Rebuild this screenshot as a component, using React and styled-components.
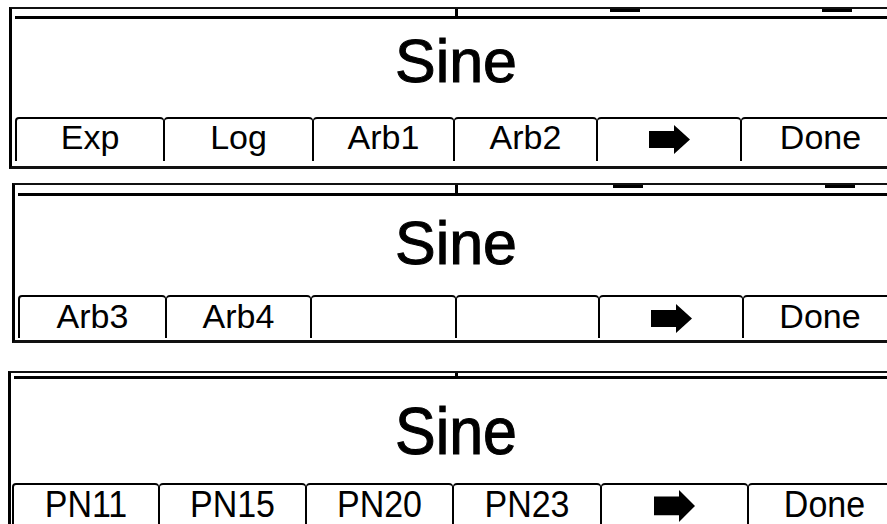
import React from 'react';
import styled, { createGlobalStyle } from 'styled-components';

const GlobalStyle = createGlobalStyle`
  html, body {
    margin: 0;
    padding: 0;
    background: #fff;
  }
  body {
    font-family: "Liberation Sans", Arial, sans-serif;
    color: #000;
  }
`;

const Page = styled.div`
  width: 887px;
  height: 524px;
  overflow: hidden;
  display: flex;
  flex-direction: column;
`;

const Screen = styled.div`
  flex-shrink: 0;
  width: ${p => p.$width}px;
  margin-top: ${p => p.$top}px;
  margin-left: ${p => p.$left}px;
  border-top: 2px solid #111;
  border-left: 3px solid #000;
  border-bottom: ${p => (p.$bottom ? '3px solid #111' : 'none')};
  display: flex;
  flex-direction: column;
`;

const Strip = styled.div`
  position: relative;
  height: ${p => p.$h}px;
`;

const CenterTick = styled.span`
  position: absolute;
  left: calc(50% - 1px);
  top: 0;
  bottom: 0;
  width: 3px;
  background: #000;
`;

const Marker = styled.span`
  position: absolute;
  top: 0;
  left: ${p => p.$x}px;
  width: 30px;
  height: 3px;
  background: #000;
`;

const HeavyRule = styled.div`
  height: 3px;
  margin-left: 3px;
  background: #000;
`;

const Display = styled.div`
  height: ${p => p.$h}px;
  padding-top: ${p => p.$pad}px;
  box-sizing: border-box;
  text-align: center;
`;

const Title = styled.div`
  display: inline-block;
  font-size: 61px;
  line-height: 62px;
  -webkit-text-stroke: 1px #000;
  transform: scaleY(${p => p.$stretch});
  transform-origin: top center;
`;

const TabRow = styled.div`
  display: grid;
  grid-template-columns: ${p => p.$cols};
  margin-left: ${p => p.$inset}px;
  height: ${p => p.$h}px;
  margin-bottom: ${p => p.$gap}px;
`;

const Tab = styled.div`
  border-top: 2px solid #000;
  border-left: ${p => (p.$first ? 2 : 1)}px solid #000;
  border-right: 1px solid #000;
  border-radius: 4px 4px 0 0;
  display: flex;
  justify-content: center;
  align-items: flex-start;
  padding-top: ${p => p.$pad}px;
  overflow: hidden;
`;

const Label = styled.span`
  display: inline-block;
  font-size: 34px;
  line-height: 34px;
  transform: scaleY(${p => p.$stretch});
  transform-origin: top center;
`;

const Arrow = styled.svg`
  margin-top: 5px;
  transform: scaleY(${p => p.$stretch});
  transform-origin: top center;
`;

const NextArrow = ({ stretch }) => (
  <Arrow $stretch={stretch} width="41" height="29" viewBox="0 0 41 29">
    <path d="M0 6 H25 V0 L41 14.5 L25 29 V23 H0 Z" fill="#000" />
  </Arrow>
);

const screens = [
  {
    left: 9, top: 7, width: 888, strip: 7, markers: true, display: 98, pad: 11,
    inset: 3, cols: '149px 149px 141px 143px 144px 1fr', tabH: 44, gap: 5,
    bottom: true, stretch: 1, tabPad: 1,
    tabs: ['Exp', 'Log', 'Arb1', 'Arb2', 'arrow', 'Done'],
  },
  {
    left: 12, top: 14, width: 882, strip: 8, markers: true, display: 99, pad: 16,
    inset: 3, cols: '148px 145px 145px 143px 144px 1fr', tabH: 43, gap: 2,
    bottom: true, stretch: 1, tabPad: 2,
    tabs: ['Arb3', 'Arb4', '', '', 'arrow', 'Done'],
  },
  {
    left: 8, top: 28, width: 890, strip: 3, markers: false, display: 104, pad: 19,
    inset: 1, cols: '147px 147px 147px 148px 147px 1fr', tabH: 60, gap: 0,
    bottom: false, stretch: 1.1, tabPad: 0,
    tabs: ['PN11', 'PN15', 'PN20', 'PN23', 'arrow', 'Done'],
  },
];

const Panel = ({ s }) => (
  <Screen $left={s.left} $top={s.top} $width={s.width} $bottom={s.bottom}>
    <Strip $h={s.strip}>
      <CenterTick />
      {s.markers && <Marker $x={598} />}
      {s.markers && <Marker $x={810} />}
    </Strip>
    <HeavyRule />
    <Display $h={s.display} $pad={s.pad}>
      <Title $stretch={s.stretch > 1 ? 1.08 : 1}>Sine</Title>
    </Display>
    <TabRow $cols={s.cols} $inset={s.inset} $h={s.tabH} $gap={s.gap}>
      {s.tabs.map((t, i) => (
        <Tab key={i} $first={i === 0} $pad={s.tabPad}>
          {t === 'arrow' ? (
            <NextArrow stretch={s.stretch} />
          ) : (
            <Label $stretch={s.stretch}>{t}</Label>
          )}
        </Tab>
      ))}
    </TabRow>
  </Screen>
);

export default function App() {
  return (
    <>
      <GlobalStyle />
      <Page>
        {screens.map((s, i) => (
          <Panel key={i} s={s} />
        ))}
      </Page>
    </>
  );
}
